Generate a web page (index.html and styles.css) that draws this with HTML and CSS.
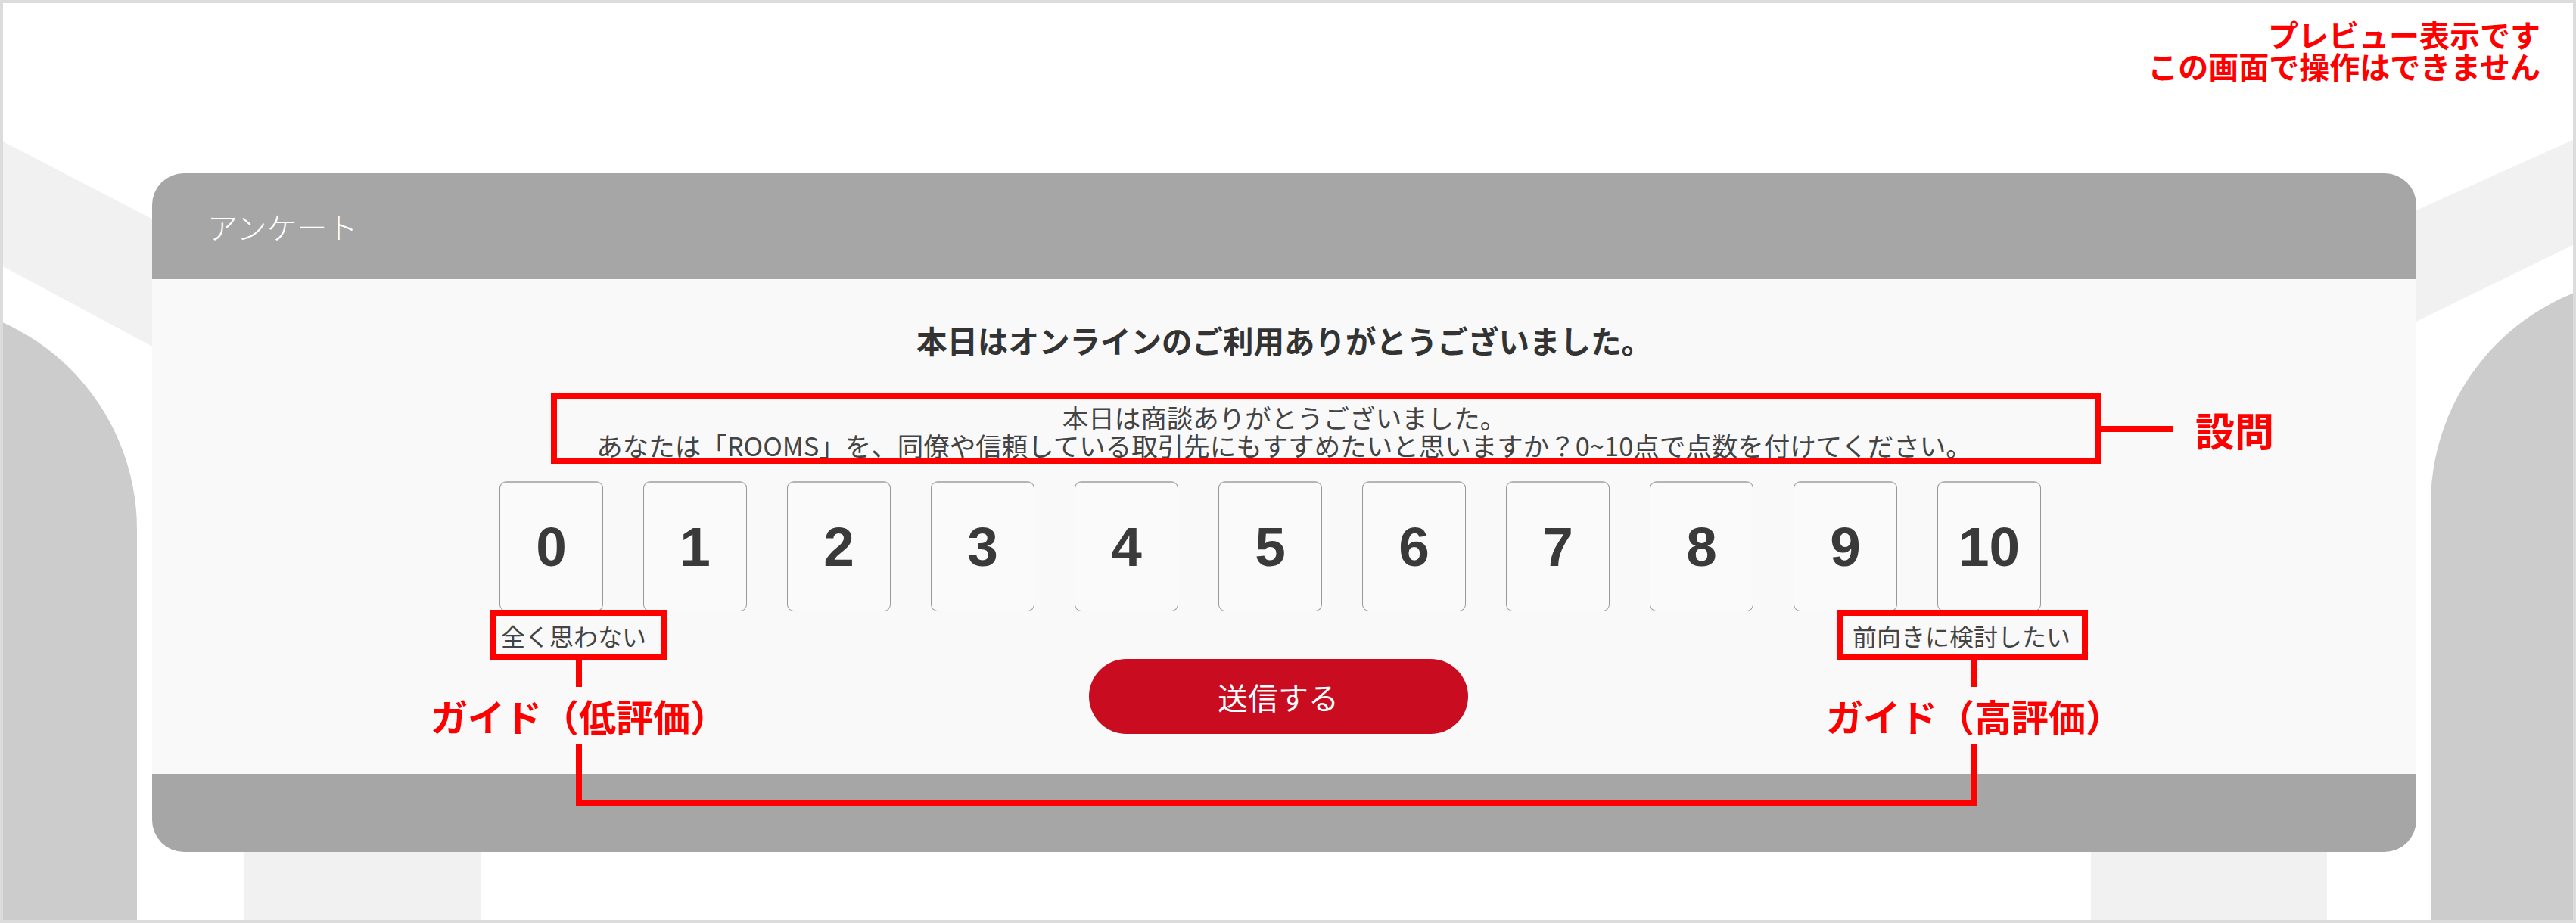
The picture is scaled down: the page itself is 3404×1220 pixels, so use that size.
FILE: index.html
```html
<!DOCTYPE html>
<html lang="ja">
<head>
    <meta charset="UTF-8">
    <meta name="viewport" content="width=device-width, initial-scale=1.0">
    <title>アンケート プレビュー</title>
    <link rel="stylesheet" href="styles.css">
</head>
<body>
    <div class="frame">
        <!-- 背景のイラスト -->
        <svg class="bg" width="3404" height="1220" viewBox="0 0 3404 1220">
            <polygon points="0,185 420,403 420,575 0,350" fill="#f1f1f1" />
            <polygon points="3404,183 2980,374 2980,529 3404,322" fill="#f1f1f1" />
            <path d="M-419 1220 V700 A300 300 0 0 1 181 700 V1220 Z" fill="#cccccc" />
            <path d="M3212 1220 V666 A300 300 0 0 1 3812 666 V1220 Z" fill="#cccccc" />
            <rect x="323" y="1100" width="312" height="120" fill="#f1f1f1" />
            <rect x="2763" y="1100" width="312" height="120" fill="#f1f1f1" />
        </svg>

        <div class="page">
            <div class="notice">プレビュー表示です<br>この画面で操作はできません</div>
            <div class="card">
                <div class="card-head">アンケート</div>
                <div class="card-body">
                    <h1 class="title">本日はオンラインのご利用ありがとうございました。</h1>
                    <p class="question">本日は商談ありがとうございました。<br>あなたは「ROOMS」を、同僚や信頼している取引先にもすすめたいと思いますか？0~10点で点数を付けてください。</p>
                    <div class="scale">
                        <ul class="scale-nums">
                            <li>0</li>
                            <li>1</li>
                            <li>2</li>
                            <li>3</li>
                            <li>4</li>
                            <li>5</li>
                            <li>6</li>
                            <li>7</li>
                            <li>8</li>
                            <li>9</li>
                            <li>10</li>
                        </ul>
                        <div class="scale-labels">
                            <span>全く思わない</span>
                            <span>前向きに検討したい</span>
                        </div>
                    </div>
                    <button class="submit">送信する</button>
                </div>
                <div class="card-foot"></div>
            </div>
        </div>

        <!-- 注釈 -->
        <div class="mark mark-question"></div>
        <div class="line line-question"></div>
        <div class="tag tag-question">設問</div>

        <div class="mark mark-low"></div>
        <div class="line line-low"></div>
        <div class="tag tag-low">ガイド（低評価）</div>

        <div class="mark mark-high"></div>
        <div class="line line-high"></div>
        <div class="tag tag-high">ガイド（高評価）</div>

        <div class="bracket"></div>
    </div>
</body>
</html>
```

FILE: styles.css
```css
* {
    box-sizing: border-box;
}
body {
    margin: 0;
    font-family: "Noto Sans CJK JP", "Noto Sans", sans-serif;
    color: #3c3c3c;
}
.frame {
    width: 3404px;
    height: 1220px;
    position: relative;
    overflow: hidden;
    background: #fff;
}
/* 外枠 */
.frame::after {
    content: "";
    position: absolute;
    top: 0;
    left: 0;
    right: 0;
    bottom: 0;
    border: 4px solid #dcdcdc;
    pointer-events: none;
}
.bg {
    position: absolute;
    top: 0;
    left: 0;
}
.page {
    position: relative;
}
.notice {
    padding: 24px 47px 0 0;
    text-align: right;
    font-size: 40px;
    font-weight: bold;
    line-height: 42px;
    color: #ff0000;
}
.card {
    width: 2992px;
    margin: 121px 0 0 201px;
    border-radius: 42px;
    overflow: hidden;
}
.card-head {
    height: 140px;
    padding-left: 73px;
    display: flex;
    align-items: center;
    background: #a6a6a6;
    color: #fff;
    font-size: 40px;
    font-weight: 300;
}
.card-body {
    height: 654px;
    padding-top: 51px;
    background: #f9f9f9;
}
.card-foot {
    height: 103px;
    background: #a6a6a6;
}
.title {
    margin: 0;
    font-size: 40.5px;
    line-height: 60px;
    font-weight: bold;
    text-align: center;
    color: #333;
}
.question {
    margin: 53px 0 0;
    font-size: 34.5px;
    line-height: 37px;
    text-align: center;
    color: #444;
}
.scale {
    width: 2078px;
    margin: 29px auto 0;
}
.scale-nums {
    margin: 0;
    padding: 0 0 0 2px;
    list-style: none;
    display: flex;
    gap: 53px;
}
.scale-nums>li {
    width: 137px;
    height: 172px;
    border: 1px solid #999;
    border-top: 2px solid #b4b4b4;
    border-radius: 9px;
    background: #fafafa;
    display: flex;
    align-items: center;
    justify-content: center;
    font-family: "Liberation Sans", Arial, sans-serif;
    font-size: 73px;
    font-weight: bold;
    color: #3a3a3a;
}
.scale-labels {
    margin-top: 12px;
    padding-left: 4px;
    display: flex;
    justify-content: space-between;
    font-size: 32px;
    line-height: 40px;
    color: #444;
}
.submit {
    display: block;
    width: 501px;
    height: 99px;
    margin: 11px auto 0;
    padding: 0;
    border: none;
    border-radius: 50px;
    background: #c90c20;
    color: #fff;
    font-family: inherit;
    font-size: 40px;
    outline: none;
    cursor: pointer;
    transform: translateX(-8px);
}
/* 注釈（赤枠・線・ラベル） */
.mark {
    position: absolute;
    border: 8px solid #ff0000;
}
.mark-question {
    left: 728px;
    top: 519px;
    width: 2048px;
    height: 94px;
}
.mark-low {
    left: 647px;
    top: 806px;
    width: 234px;
    height: 66px;
}
.mark-high {
    left: 2428px;
    top: 806px;
    width: 331px;
    height: 66px;
}
.line {
    position: absolute;
    background: #ff0000;
}
.line-question {
    left: 2776px;
    top: 563px;
    width: 95px;
    height: 8px;
}
.line-low {
    left: 761px;
    top: 872px;
    width: 8px;
    height: 36px;
}
.line-high {
    left: 2605px;
    top: 872px;
    width: 8px;
    height: 36px;
}
.bracket {
    position: absolute;
    left: 761px;
    top: 983px;
    width: 1852px;
    height: 82px;
    border: 8px solid #ff0000;
    border-top: none;
}
.tag {
    position: absolute;
    color: #ff0000;
    font-weight: bold;
    white-space: nowrap;
}
.tag-question {
    left: 2901px;
    top: 542px;
    font-size: 52px;
    line-height: 52px;
}
.tag-low,
.tag-high {
    top: 920px;
    width: 420px;
    font-size: 49px;
    line-height: 52px;
    text-align: center;
}
.tag-low {
    left: 555px;
}
.tag-high {
    left: 2399px;
}
```
